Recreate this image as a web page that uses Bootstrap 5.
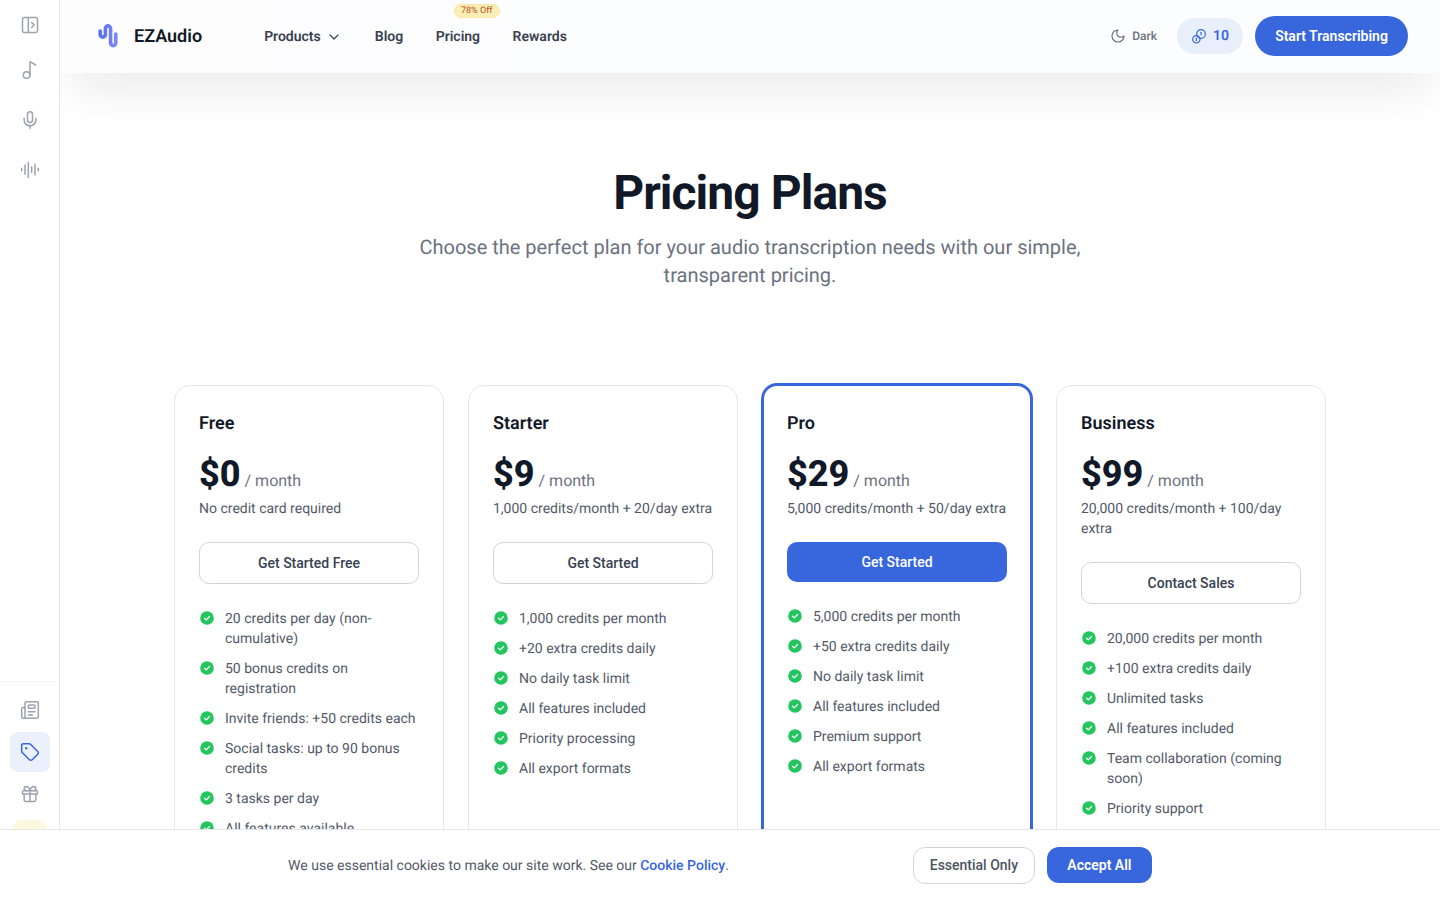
<!DOCTYPE html>
<html lang="en"><head><meta charset="utf-8"><title>Pricing Plans - EZAudio</title>
<link href="https://cdn.jsdelivr.net/npm/bootstrap@5.3.0/dist/css/bootstrap.min.css" rel="stylesheet">
<style>
html,body{height:100%;overflow:hidden}
body{font-family:Roboto,"Liberation Sans",sans-serif;color:#111827;background:#fff;text-rendering:geometricPrecision}
svg.ico{fill:none;stroke:currentColor;stroke-width:1.800;stroke-linecap:round;stroke-linejoin:round;display:block}
.shell{height:100vh}
.rail{width:60px;flex:none;border-right:1px solid #e5e7eb;color:#9ca3af;background:#fff}
.rail-top{padding-top:5px}
.rail-btn{width:40px;height:40px;border-radius:8px;margin:0 auto 10px;color:#9ca3af}
.rail-btn.first{margin-bottom:5px}
.rail-low{border-top:1px solid #f3f4f6;padding-top:8px;height:219px;overflow:hidden}
.rail-low .rail-btn{margin-bottom:2px}
.rail-btn.on{background:#ebf0fc;color:#3867dd}
.rail-gold{width:34px;height:36px;border-radius:8px;background:#fef8e0;margin:6px auto 0;color:#e8c25a;font-size:12px}
.mainpane{min-width:0;overflow:hidden}
.topbar{height:73px;padding:0 32px 1px 38px;background:linear-gradient(90deg,#fdfdfe,#fcfdff);box-shadow:0 25px 50px -12px rgba(17,24,39,.1);position:relative;z-index:2}
.logo-txt{font-size:18px;font-weight:600;margin-left:16px;color:#111827}
.menu{margin-left:62px;gap:32.500px;padding-top:2px}
.menu a{font-size:14px;font-weight:600;color:#374151;text-decoration:none;position:relative}
.off-tag{position:absolute;top:-23px;left:18px;width:46px;height:14px;font-size:9px;line-height:13px;text-align:center;border-radius:7px;background:#fdeeb5;color:#b4511a;border:1px solid #fbe6a2;white-space:nowrap;font-weight:400}
.dark-tog{font-size:12px;font-weight:500;color:#6b7280;gap:6px;margin-right:20px}
.credit-pill{height:36px;width:66px;border-radius:18px;background:#e9eefb;color:#3867dd;font-size:14px;font-weight:600;gap:6px;margin-right:12px}
.go-btn{height:40px;width:153px;border-radius:20px;background:#3867dd;color:#fff;font-size:14px;font-weight:600;border:0;padding:0}
.hero{padding-top:92px;text-align:center}
.hero h1{font-size:48px;line-height:56px;font-weight:700;letter-spacing:-.96px;margin:0 0 12px;color:#111827}
.hero p{font-size:20px;line-height:28px;color:#6b7280;width:672px;margin:0 auto}
.plans{width:1152px;margin:96px auto 0;display:grid;grid-template-columns:repeat(4,270px);gap:24px}
.plan{border:1px solid #e5e7eb;border-radius:16px;padding:24px;background:#fff;height:560px}
.plan.hot{border:3px solid #3867dd;margin:-2px -1px 0;padding:24px 23px;height:562px}
.plan h3{font-size:18px;line-height:28px;font-weight:600;margin:0 0 14px;color:#111827}
.amt{font-size:36px;line-height:44px;font-weight:800;color:#111827}
.per{font-size:16px;color:#6b7280;margin-left:4px}
.sub{font-size:14px;line-height:20px;color:#525a68;margin:3px 0 23px}
.pick{display:block;width:100%;height:42px;border:1px solid #d1d5db;border-radius:10px;background:#fff;color:#374151;font-size:14px;font-weight:500;padding:0;margin-bottom:24px}
.pick.fill{height:40px;background:#3867dd;border:0;color:#fff}
.feats{list-style:none;margin:0;padding:0}
.feats li{display:flex;gap:10px;font-size:14px;line-height:20px;color:#525a68;padding-top:1px;margin-bottom:9px}
.feats svg{flex:none;margin-top:1px;width:16px;height:16px}
.cookie{position:fixed;left:0;right:0;bottom:0;height:71px;border-top:1px solid #e5e7eb;background:#fff;z-index:5;gap:184px}
.cookie p{font-size:14px;margin:0;padding-top:2px;color:#525a68}
.cookie p a{color:#3867dd;font-weight:500;text-decoration:none}
.ck-a{height:37px;width:122px;border:1px solid #d1d5db;border-radius:12px;background:#fff;color:#4b5563;font-size:14px;font-weight:500;padding:0}
.ck-b{height:36px;width:105px;border:0;border-radius:12px;background:#3867dd;color:#fff;font-size:14px;font-weight:600;padding:2px 0 0}
</style></head>
<body>
<svg width="0" height="0" class="position-absolute"><defs>
<symbol id="okc" viewBox="0 0 16 16"><circle cx="8" cy="8" r="6.800" fill="#22c55e"/><path d="M5.500 8.200l1.800 1.700L10.500 6.500" fill="none" stroke="#fff" stroke-width="1.300" stroke-linecap="round" stroke-linejoin="round"/></symbol>
</defs></svg>
<div class="shell d-flex">
<aside class="rail d-flex flex-column justify-content-between">
 <div class="rail-top">
  <div class="rail-btn first d-flex align-items-center justify-content-center"><svg class="ico" width="20" height="20" viewBox="0 0 24 24"><rect x="3" y="3" width="18" height="18" rx="2"/><path d="M10 3v18M14 9l3 3-3 3"/></svg></div>
  <div class="rail-btn d-flex align-items-center justify-content-center"><svg class="ico" width="20" height="20" viewBox="0 0 24 24"><circle cx="8" cy="18" r="4"/><path d="M12 18V2l7 4"/></svg></div>
  <div class="rail-btn d-flex align-items-center justify-content-center"><svg class="ico" width="20" height="20" viewBox="0 0 24 24"><rect x="9" y="2" width="6" height="13" rx="3"/><path d="M19 10v2a7 7 0 0 1-14 0v-2M12 19v3"/></svg></div>
  <div class="rail-btn d-flex align-items-center justify-content-center"><svg class="ico" width="20" height="20" viewBox="0 0 24 24"><path d="M2 10v3M6 6v11M10 3v18M14 8v7M18 5v13M22 10v3"/></svg></div>
 </div>
 <div class="rail-low">
  <div class="rail-btn d-flex align-items-center justify-content-center"><svg class="ico" width="20" height="20" viewBox="0 0 24 24"><path d="M4 22h16a2 2 0 0 0 2-2V4a2 2 0 0 0-2-2H8a2 2 0 0 0-2 2v16a2 2 0 0 1-2 2Zm0 0a2 2 0 0 1-2-2v-9c0-1.100.9-2 2-2h2"/><path d="M18 14h-8M15 18h-5"/><rect x="10" y="6" width="8" height="4" rx="1"/></svg></div>
  <div class="rail-btn on d-flex align-items-center justify-content-center"><svg class="ico" width="20" height="20" viewBox="0 0 24 24"><path d="M12.600 2.600A2 2 0 0 0 11.200 2H4a2 2 0 0 0-2 2v7.200a2 2 0 0 0 .6 1.400l8.700 8.700a2.400 2.400 0 0 0 3.400 0l6.600-6.600a2.400 2.400 0 0 0 0-3.400Z"/><circle cx="7.500" cy="7.500" r=".6" fill="currentColor"/></svg></div>
  <div class="rail-btn d-flex align-items-center justify-content-center"><svg class="ico" width="20" height="20" viewBox="0 0 24 24"><rect x="3" y="8" width="18" height="4" rx="1"/><path d="M12 8v13M19 12v7a2 2 0 0 1-2 2H7a2 2 0 0 1-2-2v-7M7.500 8a2.500 2.500 0 0 1 0-5A5 8 0 0 1 12 8a5 8 0 0 1 4.500-5 2.500 2.500 0 0 1 0 5"/></svg></div>
  <div class="rail-gold d-flex justify-content-center pt-1">★</div>
 </div>
</aside>
<div class="mainpane flex-grow-1">
 <header class="topbar d-flex align-items-center">
  <svg width="20" height="24" viewBox="0 0 20 24" fill="none" stroke-width="3.600" stroke-linecap="round" stroke-linejoin="round"><defs><linearGradient id="lg" x1="0" x2="1" y1="0" y2="0"><stop offset="0" stop-color="#5570f0"/><stop offset="1" stop-color="#7f86f7"/></linearGradient></defs><path d="M2.200 7v3.500a2.600 2.600 0 0 0 5.200 0V4.500a2.600 2.600 0 0 1 5.200 0V19a2.600 2.600 0 0 0 5.200 0v-9" stroke="url(#lg)"/></svg>
  <span class="logo-txt">EZAudio</span>
  <nav class="menu d-flex align-items-center">
   <a href="#" class="d-flex align-items-center" style="gap:5.500px">Products <svg class="ico" width="16" height="16" viewBox="0 0 24 24"><path d="m6 9 6 6 6-6"/></svg></a>
   <a href="#">Blog</a>
   <a href="#">Pricing<span class="off-tag">78% Off</span></a>
   <a href="#">Rewards</a>
  </nav>
  <div class="ms-auto d-flex align-items-center">
   <div class="dark-tog d-flex align-items-center"><svg class="ico" width="16" height="16" viewBox="0 0 24 24"><path d="M12 3a6 6 0 0 0 9 9 9 9 0 1 1-9-9Z"/></svg>Dark</div>
   <div class="credit-pill d-flex align-items-center justify-content-center"><svg class="ico" width="16" height="16" viewBox="0 0 24 24"><circle cx="15" cy="9" r="6.500"/><path d="M15 6.500V10"/><circle cx="8" cy="17" r="5.500"/><path d="M8 15v4"/></svg>10</div>
   <button class="go-btn btn">Start Transcribing</button>
  </div>
 </header>
 <section class="hero">
  <h1>Pricing Plans</h1>
  <p>Choose the perfect plan for your audio transcription needs with our simple, transparent pricing.</p>
 </section>
 <section class="plans">
  <div class="plan">
   <h3>Free</h3>
   <div><span class="amt">$0</span><span class="per">/ month</span></div>
   <p class="sub">No credit card required</p>
   <button class="pick btn">Get Started Free</button>
   <ul class="feats">
    <li><svg><use href="#okc"/></svg>20 credits per day (non-cumulative)</li>
    <li><svg><use href="#okc"/></svg>50 bonus credits on registration</li>
    <li><svg><use href="#okc"/></svg>Invite friends: +50 credits each</li>
    <li><svg><use href="#okc"/></svg>Social tasks: up to 90 bonus credits</li>
    <li><svg><use href="#okc"/></svg>3 tasks per day</li>
    <li><svg><use href="#okc"/></svg>All features available</li>
   </ul>
  </div>
  <div class="plan">
   <h3>Starter</h3>
   <div><span class="amt">$9</span><span class="per">/ month</span></div>
   <p class="sub">1,000 credits/month + 20/day extra</p>
   <button class="pick btn">Get Started</button>
   <ul class="feats">
    <li><svg><use href="#okc"/></svg>1,000 credits per month</li>
    <li><svg><use href="#okc"/></svg>+20 extra credits daily</li>
    <li><svg><use href="#okc"/></svg>No daily task limit</li>
    <li><svg><use href="#okc"/></svg>All features included</li>
    <li><svg><use href="#okc"/></svg>Priority processing</li>
    <li><svg><use href="#okc"/></svg>All export formats</li>
   </ul>
  </div>
  <div class="plan hot">
   <h3>Pro</h3>
   <div><span class="amt">$29</span><span class="per">/ month</span></div>
   <p class="sub">5,000 credits/month + 50/day extra</p>
   <button class="pick fill btn">Get Started</button>
   <ul class="feats">
    <li><svg><use href="#okc"/></svg>5,000 credits per month</li>
    <li><svg><use href="#okc"/></svg>+50 extra credits daily</li>
    <li><svg><use href="#okc"/></svg>No daily task limit</li>
    <li><svg><use href="#okc"/></svg>All features included</li>
    <li><svg><use href="#okc"/></svg>Premium support</li>
    <li><svg><use href="#okc"/></svg>All export formats</li>
   </ul>
  </div>
  <div class="plan">
   <h3>Business</h3>
   <div><span class="amt">$99</span><span class="per">/ month</span></div>
   <p class="sub">20,000 credits/month + 100/day extra</p>
   <button class="pick btn">Contact Sales</button>
   <ul class="feats">
    <li><svg><use href="#okc"/></svg>20,000 credits per month</li>
    <li><svg><use href="#okc"/></svg>+100 extra credits daily</li>
    <li><svg><use href="#okc"/></svg>Unlimited tasks</li>
    <li><svg><use href="#okc"/></svg>All features included</li>
    <li><svg><use href="#okc"/></svg>Team collaboration (coming soon)</li>
    <li><svg><use href="#okc"/></svg>Priority support</li>
   </ul>
  </div>
 </section>
</div>
</div>
<div class="cookie d-flex align-items-center justify-content-center">
 <p>We use essential cookies to make our site work. See our <a href="#">Cookie Policy</a>.</p>
 <div class="d-flex" style="gap:12px;align-items:flex-start"><button class="ck-a btn">Essential Only</button><button class="ck-b btn">Accept All</button></div>
</div>
</body></html>
